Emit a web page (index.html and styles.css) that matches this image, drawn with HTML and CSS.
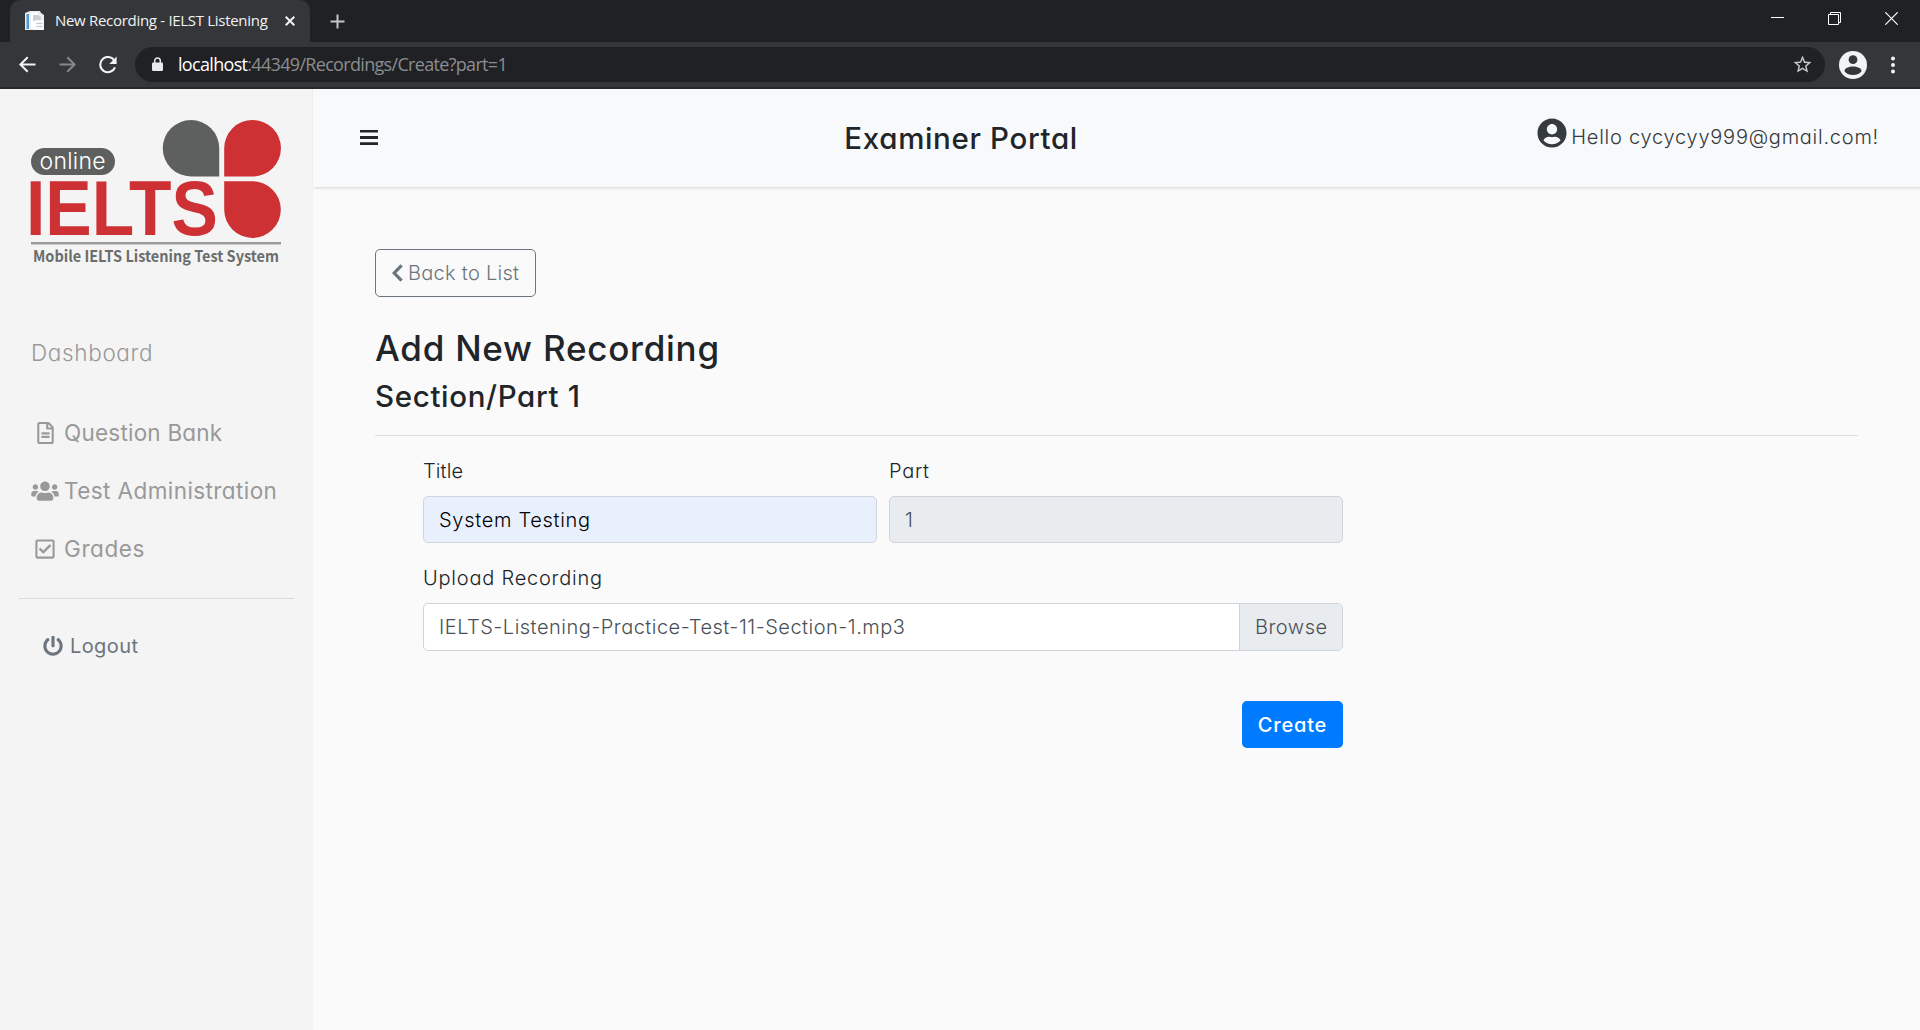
FILE: index.html
```html
<!DOCTYPE html>
<html lang="en">
<head>
<meta charset="utf-8">
<title>New Recording - IELST Listening</title>
<link rel="stylesheet" href="styles.css">
</head>
<body>
<div class="browser">
  <div class="tabstrip">
    <div class="tab">
      <svg class="favicon" width="20" height="20" viewBox="0 0 20 20"><path fill="#e9edf0" d="M0 2l5-2h10l1 2 3 2v15H0z"/><path fill="#4d9ad0" d="M1.500 3h2.500v15H1.500z"/><path fill="#fff" d="M6 1.500h7V18H6z"/><path fill="#c9ced3" d="M8 4h5l3 2v4H8z"/><path fill="#f7f8f9" d="M10 9h9v10h-9z"/><path stroke="#c2c7cc" d="M11.500 12.500h6M11.500 15.500h6"/></svg>
      <span class="tab-title">New Recording - IELST Listening</span>
      <svg class="tab-close" width="10" height="10" viewBox="0 0 10 10"><path stroke="#f1f3f4" stroke-width="2" d="M.7.7l8.600 8.600M9.300.7L.7 9.300"/></svg>
    </div>
    <svg class="new-tab" width="15" height="15" viewBox="0 0 15 15"><path stroke="#c3c5c8" stroke-width="2" d="M7.500.5v14M.5 7.500h14"/></svg>
    <div class="window-controls">
      <svg width="13" height="13" viewBox="0 0 13 13"><path stroke="#fff" d="M0 5.500h13"/></svg>
      <svg width="13" height="13" viewBox="0 0 13 13"><path fill="none" stroke="#fff" d="M.5 2.500h10v10H.5zM2.500 2.500v-2h10v10h-2"/></svg>
      <svg width="13" height="13" viewBox="0 0 13 13"><path stroke="#fff" stroke-width="1.200" d="M.3.3l12.400 12.400M12.700.3L.3 12.700"/></svg>
    </div>
  </div>
  <div class="toolbar">
    <svg width="17" height="17" viewBox="0 0 17 17"><path fill="none" stroke="#f1f3f4" stroke-width="2" d="M16.500 8.500H1.800M8.700 1.200L1.400 8.500l7.300 7.300"/></svg>
    <svg width="17" height="17" viewBox="0 0 17 17"><path fill="none" stroke="#85878a" stroke-width="2" d="M.5 8.500h14.700M8.300 1.200l7.300 7.300-7.300 7.300"/></svg>
    <svg width="18" height="18" viewBox="0 0 18 18"><path fill="none" stroke="#f1f3f4" stroke-width="2.100" d="M15.100 4.200A7.600 7.600 0 1 0 16 11.300"/><path fill="#f1f3f4" d="M17.600.6v7.300h-7.300z"/></svg>
    <div class="address">
      <svg width="11" height="15" viewBox="0 0 11 15"><path fill="#e8eaed" d="M1.200 5.500h8.600q1.200 0 1.200 1.200v6.100q0 1.200-1.200 1.200H1.200Q0 14 0 12.800V6.700q0-1.200 1.200-1.200z"/><path fill="none" stroke="#e8eaed" stroke-width="1.500" d="M2.700 6V3.700a2.800 2.800 0 0 1 5.600 0V6"/></svg>
      <span class="url"><span class="host">localhost</span>:44349/Recordings/Create?part=1</span>
      <svg class="star" width="19" height="19" viewBox="0 0 24 24"><path fill="#c6c8ca" d="M22 9.240l-7.190-.62L12 2 9.190 8.630 2 9.240l5.460 4.730L5.820 21 12 17.270 18.180 21l-1.630-7.030L22 9.240zM12 15.400l-3.760 2.270 1-4.280-3.320-2.880 4.380-.38L12 6.100l1.710 4.040 4.380.38-3.320 2.880 1 4.280L12 15.400z" transform="translate(-1.500 -1.500) scale(1.130)"/></svg>
    </div>
    <svg class="profile" width="28" height="28" viewBox="0 0 28 28"><circle cx="14" cy="14" r="14" fill="#f1f3f4"/><circle cx="14" cy="8.700" r="4.400" fill="#35363a"/><path fill="#35363a" d="M5.500 20.200C5.500 17 10 15.500 14 15.500s8.500 1.500 8.500 4.700C21 22.500 18 24 14 24s-7-1.500-8.500-3.800z"/></svg>
    <svg class="more" width="4" height="18" viewBox="0 0 4 18"><g fill="#f1f3f4"><circle cx="2" cy="2.500" r="2"/><circle cx="2" cy="9" r="2"/><circle cx="2" cy="15.500" r="2"/></g></svg>
  </div>
</div>

<div class="page">
  <aside class="sidebar">
    <svg class="logo" width="250" height="150" viewBox="0 0 250 150">
      <path fill="#5e605f" d="M160 0a28.250 28.250 0 0 0 0 56.500h28.250V28.250A28.250 28.250 0 0 0 160 0z"/>
      <path fill="#cd3134" d="M221.700 0a28.250 28.250 0 0 1 0 56.500h-28.500V28.250A28.250 28.250 0 0 1 221.700 0zM193.200 61.300h28.500a28.300 28.300 0 1 1-28.500 28.500z"/>
      <rect y="28" width="84" height="27" rx="13.500" fill="#5e605f"/>
      <text class="logo-online" x="8.500" y="49" textLength="66">online</text>
      <text class="logo-name" x="-5" y="115" textLength="192" lengthAdjust="spacingAndGlyphs">IELTS</text>
      <path fill="#9b9b9b" d="M0 122h250v2.500H0z"/>
      <text class="logo-tag" x="2" y="142" textLength="246" lengthAdjust="spacingAndGlyphs">Mobile IELTS Listening Test System</text>
    </svg>
    <div class="nav-heading">Dashboard</div>
    <nav class="nav">
      <a class="nav-item bank"><span class="nav-icon"><svg width="17" height="22" viewBox="0 0 384 512"><path d="M288 248v28c0 6.600-5.400 12-12 12H108c-6.600 0-12-5.400-12-12v-28c0-6.600 5.400-12 12-12h168c6.600 0 12 5.400 12 12zm-12 72H108c-6.600 0-12 5.400-12 12v28c0 6.600 5.400 12 12 12h168c6.600 0 12-5.400 12-12v-28c0-6.600-5.400-12-12-12zm108-188.100V464c0 26.500-21.500 48-48 48H48c-26.500 0-48-21.500-48-48V48C0 21.500 21.500 0 48 0h204.100C264.800 0 277 5.100 286 14.100L369.900 98c9 8.900 14.100 21.200 14.100 33.900zm-128-80V128h76.100L256 51.900zM336 464V176H232c-13.300 0-24-10.700-24-24V48H48v416h288z"/></svg></span><span>Question Bank</span></a>
      <a class="nav-item admin"><span class="nav-icon"><svg width="28" height="22" viewBox="0 0 640 512"><path d="M96 224c35.300 0 64-28.700 64-64s-28.700-64-64-64-64 28.700-64 64 28.700 64 64 64zm448 0c35.300 0 64-28.700 64-64s-28.700-64-64-64-64 28.700-64 64 28.700 64 64 64zm32 32h-64c-17.600 0-33.500 7.100-45.100 18.600 40.300 22.100 68.900 62 75.100 109.400h66c17.700 0 32-14.300 32-32v-32c0-35.300-28.700-64-64-64zm-256 0c61.900 0 112-50.100 112-112S381.900 32 320 32 208 82.100 208 144s50.100 112 112 112zm76.800 32h-8.300c-20.800 10-43.900 16-68.500 16s-47.600-6-68.500-16h-8.300C179.600 288 128 339.600 128 403.200V432c0 26.500 21.500 48 48 48h288c26.500 0 48-21.500 48-48v-28.800c0-63.600-51.600-115.200-115.200-115.200zm-223.700-13.400C161.500 263.100 145.600 256 128 256H64c-35.300 0-64 28.700-64 64v32c0 17.700 14.300 32 32 32h65.900c6.300-47.400 34.900-87.300 75.200-109.400z"/></svg></span><span>Test Administration</span></a>
      <a class="nav-item grades"><span class="nav-icon"><svg width="20" height="22" viewBox="0 0 448 512"><path d="M400 32H48C21.500 32 0 53.500 0 80v352c0 26.500 21.500 48 48 48h352c26.500 0 48-21.500 48-48V80c0-26.500-21.500-48-48-48zm0 400H48V80h352v352zm-35.900-241.500L191.500 361.700c-4.700 4.700-12.300 4.600-17-.1l-90.800-91.500c-4.700-4.700-4.600-12.300.1-17l22.700-22.500c4.700-4.700 12.300-4.600 17 .1l59.800 60.300 141.400-140.200c4.700-4.700 12.300-4.600 17 .1l22.500 22.700c4.700 4.700 4.600 12.300-.1 16.900z"/></svg></span><span>Grades</span></a>
    </nav>
    <hr class="side-rule">
    <a class="logout"><svg width="20" height="20" viewBox="0 0 512 512"><path d="M400 54.100c63 45 104 118.600 104 201.900 0 136.800-110.800 247.700-247.500 248C120 504.300 8.200 393 8 256.400 7.900 173.100 48.900 99.300 111.800 54.200c11.700-8.300 28-4.800 35 7.700L162.600 90c5.900 10.500 3.100 23.800-6.600 31-41.500 30.800-68 79.600-68 134.900-.1 92.300 74.500 168.100 168 168.100 91.600 0 168.600-74.200 168-169.100-.3-51.800-24.700-101.800-68.100-134-9.700-7.200-12.400-20.500-6.500-30.900l15.800-28.100c7-12.400 23.200-16.100 34.800-7.800zM296 264V24c0-13.300-10.700-24-24-24h-32c-13.300 0-24 10.700-24 24v240c0 13.300 10.700 24 24 24h32c13.300 0 24-10.700 24-24z"/></svg><span>Logout</span></a>
  </aside>

  <div class="content">
    <header class="topbar">
      <svg class="bars" width="18" height="15" viewBox="0 0 18 15"><path fill="#212529" d="M0 0h18v2.600H0zM0 6h18v3H0zM0 12.200h18v2.800H0z"/></svg>
      <h4 class="portal">Examiner Portal</h4>
      <div class="user"><svg width="30" height="30" viewBox="0 0 496 512"><path d="M248 8C111 8 0 119 0 256s111 248 248 248 248-111 248-248S385 8 248 8zm0 96c48.600 0 88 39.400 88 88s-39.400 88-88 88-88-39.400-88-88 39.400-88 88-88zm0 344c-58.700 0-111.300-26.600-146.500-68.200 18.800-35.400 55.600-59.800 98.500-59.800 2.400 0 4.800.4 7.100 1.100 13 4.200 26.600 6.900 40.900 6.900 14.300 0 28-2.700 40.900-6.900 2.300-.7 4.700-1.100 7.100-1.100 42.900 0 79.700 24.400 98.500 59.800C359.300 421.400 306.700 448 248 448z"/></svg><span>Hello cycycyy999@gmail.com!</span></div>
    </header>
    <main class="main">
      <a class="back"><svg width="11" height="18" viewBox="0 0 11 18"><path fill="none" stroke="#6c757d" stroke-width="3.200" d="M9.600 1.300L2.200 9l7.400 7.700"/></svg><span>Back to List</span></a>
      <h3 class="title">Add New Recording</h3>
      <h4 class="subtitle">Section/Part 1</h4>
      <hr class="rule">
      <form class="form">
        <div class="row">
          <div class="field"><label class="label label-title">Title</label><div class="control filled">System Testing</div></div>
          <div class="field"><label class="label label-part">Part</label><div class="control readonly">1</div></div>
        </div>
        <div class="field"><label class="label label-upload">Upload Recording</label>
          <div class="file"><span class="file-name">IELTS-Listening-Practice-Test-11-Section-1.mp3</span><span class="browse">Browse</span></div>
        </div>
        <button class="create" type="button">Create</button>
      </form>
    </main>
  </div>
</div>
</body>
</html>
```
FILE: styles.css
```css
* { box-sizing: border-box; }
body {
  margin: 0;
  height: 1030px;
  display: flex;
  flex-direction: column;
  overflow: hidden;
  background: #fafafa;
  color: #212529;
  font: 300 20px/30px "Inter", sans-serif;
  font-feature-settings: "cv11";
}
svg { display: block; flex: none; }
h3, h4, hr { margin: 0; border: 0; }
h3, h4 { font-weight: 500; }

/* Browser frame */
.browser { height: 89px; background: #35363a; border-bottom: 2px solid #28292c; font-family: "Open Sans", sans-serif; font-weight: 400; }
.tabstrip { display: flex; align-items: center; height: 42px; background: #202124; padding-left: 10px; }
.tab { display: flex; align-items: center; width: 300px; height: 42px; padding-left: 15px; background: #35363a; border-radius: 10px 10px 0 0; }
.tab-title { width: 228px; margin-left: 10px; padding-bottom: 2px; font-size: 15px; letter-spacing: -.3px; color: #f1f3f4; white-space: nowrap; line-height: 38px; }
.tab-close { margin-left: 2px; }
.new-tab { margin-left: 20px; }
.window-controls { display: flex; gap: 44px; margin: 0 22px 6px auto; }
.toolbar { display: flex; align-items: center; height: 45px; padding-left: 19px; gap: 23px; }
.address { display: flex; align-items: center; width: 1690px; height: 35px; margin-left: -5px; padding: 0 13px 0 17px; border-radius: 18px; background: #202124; }
.url { margin-left: 15px; padding-bottom: 1px; font-size: 18px; letter-spacing: -.68px; color: #8b8d90; white-space: nowrap; }
.host { color: #fff; }
.star { margin-left: auto; }
.profile { margin-left: -9px; }
.more { margin-left: 1px; }

/* Page frame */
.page { flex: 1; display: grid; grid-template-columns: 313px 1fr; min-height: 0; }
.sidebar { background: #f4f4f4; padding-top: 31px; color: #999; }
.logo { margin-left: 31px; overflow: visible; }
.logo-online { font: 300 23px "Inter", sans-serif; fill: #fff; }
.logo-name { font: 700 77px "Liberation Sans", sans-serif; fill: #cd3134; }
.logo-tag { font: 700 15.5px "Noto Sans CJK SC", sans-serif; fill: #6b6d6c; }
.nav-heading { margin: 68px 0 0 31px; font-size: 22.5px; letter-spacing: .65px; }
.nav { display: flex; flex-direction: column; gap: 28px; margin: 50px 0 0 31px; font-size: 22.5px; font-weight: 400; white-space: nowrap; }
.nav-item { display: flex; align-items: center; height: 30px; }
.nav-icon { width: 28px; margin-right: 5px; display: flex; justify-content: center; }
.nav svg { fill: #999; }
.bank { letter-spacing: .22px; }
.admin { letter-spacing: .42px; }
.grades { letter-spacing: .6px; }
.side-rule { height: 1px; margin: 34px 19px 32px; background: #dadada; }
.logout { display: flex; align-items: center; gap: 7px; margin-left: 43px; letter-spacing: .4px; font-weight: 400; color: #6c757d; }
.logout svg { fill: #6c757d; }

.topbar { display: flex; align-items: center; justify-content: space-between; height: 98px; padding: 0 41px 0 47px; background: #f8f9fb; box-shadow: 1px 1px 3px rgba(0, 0, 0, .15); }
.bars { margin-bottom: 1px; }
.portal { margin-left: 7px; font-size: 29.5px; letter-spacing: .66px; }
.user { display: flex; align-items: center; gap: 4px; padding-bottom: 2px; color: #343a40; letter-spacing: .75px; }
.user svg { fill: #343a40; margin-bottom: 8px; }

/* Recording form */
.main { padding: 62px 62px 0 62px; }
.back { display: flex; align-items: center; gap: 5px; width: 161px; height: 48px; padding-left: 16px; border: 1px solid #6c757d; border-radius: 5px; color: #6c757d; letter-spacing: .28px; white-space: nowrap; }
.title { margin-top: 30px; font-size: 35px; line-height: 42px; letter-spacing: .75px; }
.subtitle { margin-top: 9px; font-size: 29.5px; line-height: 36px; letter-spacing: .66px; }
.rule { height: 1px; margin: 21px 0 20px; background: #dedfe0; }
.form { display: flex; flex-direction: column; gap: 20px; width: 920px; margin-left: 48px; }
.row { display: grid; grid-template-columns: 1fr 1fr; gap: 12px; }
.label { display: block; margin-bottom: 10px; }
.label-title { letter-spacing: .1px; }
.label-part { letter-spacing: .7px; }
.label-upload { letter-spacing: .78px; }
.control { height: 47px; padding: 1px 15px 0; border: 1px solid #ced4da; border-radius: 5px; line-height: 45px; }
.filled { background: #e8f0fe; color: #000; letter-spacing: .69px; }
.readonly { background: #e9ecef; color: #495057; }
.file { display: flex; height: 48px; border: 1px solid #ced4da; border-radius: 5px; background: #fff; color: #495057; line-height: 46px; overflow: hidden; }
.file-name { flex: 1; padding-left: 15px; letter-spacing: .49px; }
.browse { width: 103px; padding-left: 15px; border-left: 1px solid #ced4da; background: #e9ecef; letter-spacing: .5px; }
.create { align-self: flex-end; width: 101px; height: 47px; margin-top: 30px; padding: 0; border: 0; border-radius: 5px; background: #007bff; color: #fff; font: 500 20px "Inter", sans-serif; font-feature-settings: "cv11"; letter-spacing: .8px; }
```
